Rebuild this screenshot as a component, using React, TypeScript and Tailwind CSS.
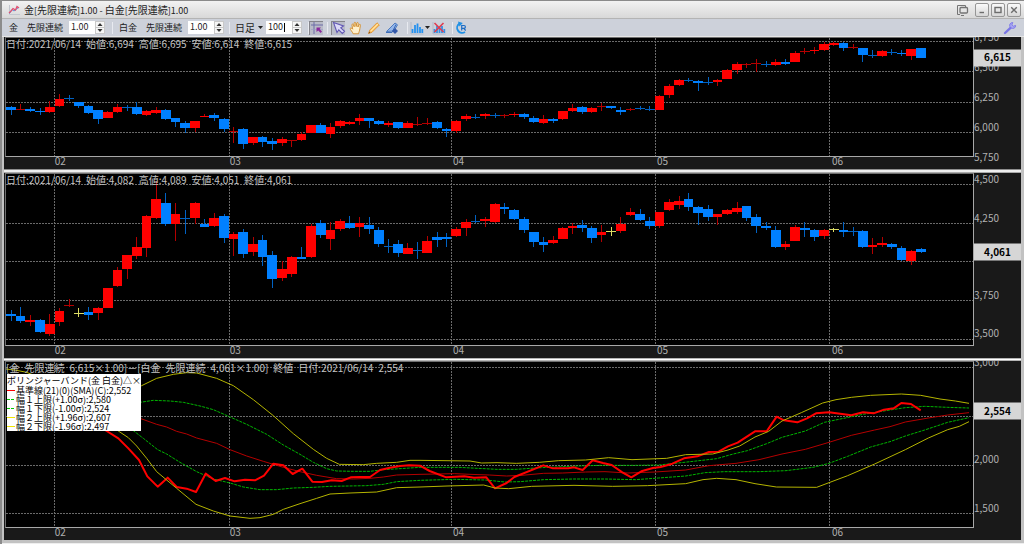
import React from "react";

type Kind = "R" | "B" | "Y";
type Candle = [Kind, number, number, number, number];
type Tick = { label: string; y: number };
type Curve = { color: string; width: number; dash?: string; points: string };

// Chart space uses three units per pixel.
const LEFT = 18;
const SPAN = 2901;
const STEP = 29.04;

const MONTHS = [
  { label: "02", x: 164 },
  { label: "03", x: 687 },
  { label: "04", x: 1355 },
  { label: "05", x: 1965 },
  { label: "06", x: 2488 },
];

// Each entry: kind, body top, body bottom, high, low.
const parse = (source: string): Candle[] =>
  source
    .trim()
    .split(/\s*,\s*/)
    .map((row) => {
      const [kind, ...n] = row.split(" ");
      return [kind as Kind, Number(n[0]), Number(n[1]), Number(n[2]), Number(n[3])];
    });

const GOLD = parse(`B 214 221 209 237,R 220 223 204 223,B 219 225 214 229,B 225 229 216 237,R 213 228 196 230,
R 188 211 173 214,B 186 189 177 196,B 199 211 197 217,B 209 231 207 234,B 222 248 222 263,R 229 246 225 246,
R 213 228 204 232,B 213 215 207 226,B 213 234 197 236,R 226 237 222 241,R 221 231 212 233,B 222 249 219 251,
B 247 258 247 272,B 262 275 255 291,R 255 277 255 288,R 239 243 235 243,B 238 246 232 256,B 249 280 245 287,
R 285 288 273 322,B 280 324 276 339,R 304 320 304 326,B 304 318 301 334,B 315 324 305 341,R 309 320 302 329,
R 312 315 312 332,R 294 312 287 314,R 267 291 267 291,B 267 291 262 291,R 272 293 262 306,R 255 270 253 275,
R 257 263 255 268,R 245 255 233 267,B 247 256 247 275,B 255 264 252 266,R 261 267 256 272,B 259 275 257 279,
R 261 275 256 276,R 264 267 244 270,R 261 263 246 266,B 259 275 256 280,B 279 284 277 302,R 255 284 252 292,
R 240 249 234 255,B 242 245 235 250,R 234 241 230 248,B 238 241 230 245,R 236 238 234 247,R 233 238 228 244,
B 235 244 231 249,B 247 258 240 261,R 249 262 238 264,B 250 254 245 260,R 226 249 224 253,R 216 226 204 228,
B 213 228 210 235,R 215 228 213 232,R 211 214 200 224,B 211 215 209 219,B 221 228 212 236,R 218 220 216 224,
B 215 218 211 222,B 218 220 209 225,R 181 221 178 223,R 150 178 145 187,R 132 148 130 150,B 131 134 126 138,
B 136 141 132 165,B 138 141 124 148,R 132 138 129 150,R 101 129 98 130,R 84 103 77 114,R 84 87 82 95,
R 81 84 68 107,B 84 87 74 94,R 77 88 68 90,B 77 84 70 88,R 51 77 46 79,R 44 47 37 54,R 42 46 33 54,
R 23 41 19 45,R 22 26 18 30,B 21 36 18 45,R 33 36 24 39,B 35 58 35 77,B 58 61 43 66,R 45 59 42 63,
B 47 50 38 57,B 51 55 43 59,R 40 59 39 72,B 37 65 37 65`);

const PLATINUM = parse(`B 433 437 421 454,B 438 454 411 459,R 450 455 435 467,B 450 487 447 490,R 461 491 432 497,
R 423 455 414 467,R 406 409 388 412,Y 429 431 414 440,B 426 434 411 449,R 414 430 412 449,R 355 413 355 414,
R 301 347 291 351,R 256 298 255 327,R 231 257 201 267,R 138 234 136 261,R 87 144 32 147,B 98 163 70 167,
R 133 163 99 213,B 145 148 120 192,R 100 144 96 162,B 161 171 146 171,R 143 168 128 170,B 138 203 133 218,
R 192 208 186 258,B 185 253 176 263,R 221 247 201 258,B 209 260 196 288,B 256 326 244 354,R 297 323 272 333,
R 262 312 259 320,B 262 266 232 267,R 167 261 163 264,B 160 194 150 204,R 181 208 157 239,R 153 178 148 184,
B 160 173 138 176,R 160 172 142 200,B 165 178 142 192,B 181 222 171 232,B 228 230 208 249,B 221 248 209 260,
R 233 251 218 251,B 239 242 215 267,R 213 248 197 249,B 201 210 185 230,B 202 208 190 232,R 177 197 170 201,
R 155 173 148 197,B 154 157 135 158,R 148 154 142 170,R 102 156 100 160,B 110 116 99 133,B 119 147 117 150,
B 147 180 142 188,B 185 217 185 230,B 216 225 201 246,R 211 220 197 223,R 174 206 172 208,R 169 174 159 192,
B 165 175 149 185,B 174 204 169 220,R 185 194 166 217,Y 183 185 171 197,R 161 182 140 190,R 127 135 113 138,
B 131 151 117 154,B 152 168 142 177,R 127 168 125 173,R 96 121 86 124,R 94 104 79 117,B 88 111 69 123,
B 112 128 107 164,B 117 142 106 154,R 133 142 131 164,R 120 131 117 136,R 115 125 97 131,B 107 144 107 153,
B 141 168 133 190,B 167 173 157 179,B 181 230 169 235,R 221 230 212 241,R 171 213 164 214,B 174 180 157 200,
B 181 201 177 213,R 181 198 178 208,Y 178 181 174 186,B 181 187 155 201,B 182 185 171 199,B 183 232 180 234,
R 226 232 204 251,R 219 224 201 232,B 223 231 220 238,B 233 269 229 273,R 242 272 240 284,B 237 246 234 250`);

const CURVES: Curve[] = [
  {
    color: "#00b400",
    width: 1,
    dash: "3 1",
    points:
      "300,170 420,142 460,136 510,138 550,142 600,153 640,164 686,184 740,208 800,238 850,270 900,298 940,322 980,341 1010,348 1060,349 1110,349 1150,344 1200,341 1260,337 1376,337 1433,340 1491,343 1549,343 1607,339 1664,336 1734,333 1803,331 1907,331 1976,330 2034,324 2080,319 2150,311 2196,298 2242,287 2300,266 2346,247 2416,228 2473,202 2531,190 2589,178 2670,165 2716,158 2774,154 2843,157 2907,159",
  },
  {
    color: "#00b400",
    width: 1,
    dash: "3 1",
    points:
      "370,205 400,227 430,250 473,284 500,297 540,322 590,350 640,372 690,384 730,396 780,404 830,404 880,399 940,397 990,394 1100,392 1150,388 1190,380 1260,376 1364,373 1456,375 1514,381 1560,380 1630,374 1722,372 1815,372 1907,374 1976,369 2057,363 2115,353 2173,350 2277,350 2358,347 2439,337 2487,325 2543,304 2612,276 2670,260 2716,243 2774,225 2843,202 2907,188",
  },
  {
    color: "#b40000",
    width: 1,
    points:
      "370,175 420,190 470,208 500,216 530,229 560,237 590,249 650,265 690,284 740,303 790,319 850,337 900,350 950,361 1010,371 1060,372 1110,370 1150,366 1190,360 1260,358 1364,356 1410,358 1468,360 1520,363 1566,361 1630,355 1688,354 1757,351 1815,350 1884,354 1965,351 2057,345 2127,332 2208,325 2277,314 2346,297 2416,283 2487,262 2554,241 2624,225 2670,215 2716,201 2785,189 2843,180 2907,173",
  },
  {
    color: "#ff0000",
    width: 2,
    points:
      "300,215 320,228 355,250 385,280 417,315 442,364 473,395 503,368 530,396 560,401 588,411 617,356 647,378 675,369 704,379 735,374 765,376 792,362 820,326 850,331 878,357 907,341 937,380 966,381 995,376 1025,378 1052,367 1080,366 1110,366 1140,345 1170,338 1200,333 1228,331 1260,332 1289,348 1339,367 1393,364 1422,368 1459,367 1485,400 1520,384 1543,366 1630,331 1659,340 1705,340 1722,337 1748,345 1778,316 1809,324 1835,330 1867,352 1894,367 1924,349 1959,339 1982,336 2017,326 2052,310 2092,304 2127,291 2156,290 2184,274 2213,263 2265,229 2300,229 2330,185 2352,196 2392,202 2421,190 2448,175 2487,172 2554,181 2589,172 2621,175 2652,164 2681,160 2704,144 2733,147 2762,166",
  },
  {
    color: "#b4b400",
    width: 1,
    points:
      "18,42 50,46 80,52 150,80 300,130 400,105 425,92 470,70 520,58 560,53 590,54 650,70 700,92 760,134 820,182 880,236 940,283 980,310 1018,328 1090,329 1130,325 1190,322 1230,316 1260,316 1410,318 1445,324 1491,323 1549,325 1618,322 1676,317 1757,315 1826,308 1896,314 2000,310 2057,299 2138,297 2184,285 2219,273 2265,246 2306,229 2346,198 2404,173 2468,144 2508,134 2554,127 2612,121 2704,117 2762,121 2820,132 2866,138 2907,145",
  },
  {
    color: "#b4b400",
    width: 1,
    points:
      "330,205 355,228 385,248 410,273 440,310 470,350 530,400 588,448 640,468 690,483 750,490 780,488 820,478 850,463 900,446 950,430 990,417 1050,414 1130,411 1190,398 1260,396 1341,393 1451,390 1485,399 1526,401 1595,394 1722,391 1838,394 1942,392 2057,386 2109,374 2150,370 2208,374 2265,386 2329,396 2450,397 2487,383 2543,362 2624,327 2716,284 2785,249 2843,224 2878,214 2907,200",
  },
];

const BODY = { R: "#ff0000", B: "#0080ff", Y: "#dcdc64" };
const WICK = { R: "#b40000", B: "#0062c4", Y: "#dcdc64" };

function Candles({ data }: { data: Candle[] }) {
  return (
    <g shapeRendering="crispEdges">
      {data.map(([kind, top, bottom, high, low], i) => {
        const x = 18.3 + STEP * i;
        const thin = bottom - top <= 3;
        return (
          <g key={i}>
            <rect x={x + 13.5} y={high} width={3} height={Math.max(low - high, 3)} fill={WICK[kind]} />
            <rect
              x={x}
              y={top}
              width={STEP}
              height={Math.max(bottom - top, 3)}
              fill={thin ? WICK[kind] : BODY[kind]}
            />
          </g>
        );
      })}
    </g>
  );
}

function Words({ words }: { words: string[] }) {
  return (
    <p className="pointer-events-none absolute top-0 left-0 flex gap-[5px] text-[10px] leading-3 whitespace-nowrap text-[#c4c4c4]">
      {words.map((w, i) => (
        <span key={i}>{w}</span>
      ))}
    </p>
  );
}

type PanelProps = {
  name: string;
  grow: string;
  top: number;
  height: number;
  grid: number[];
  ticks: Tick[];
  price: Tick;
  words: string[];
  drawing: React.ReactNode;
  children?: React.ReactNode;
};

function Panel({ name, grow, top, height, grid, ticks, price, words, drawing, children }: PanelProps) {
  const pct = (y: number) => `${((y - top) / height) * 100}%`;
  return (
    <section aria-label={name} className={`flex min-h-0 bg-[#191919] ${grow}`}>
      <div className="flex min-w-0 flex-1 flex-col">
        <div className="relative ml-px min-h-0 flex-1 border border-t-[#6e6e6e] border-r-[#a8a8a8] border-b-[#a8a8a8] border-l-[#6e6e6e] bg-black">
          <svg
            viewBox={`${LEFT} ${top} ${SPAN} ${height}`}
            preserveAspectRatio="none"
            className="absolute inset-0 h-full w-full"
            aria-hidden="true"
          >
            <g shapeRendering="crispEdges" stroke="#6a6a6a" strokeDasharray="2 1">
              {grid.map((y) => (
                <line key={y} x1={LEFT} x2={LEFT + SPAN} y1={y} y2={y} vectorEffect="non-scaling-stroke" />
              ))}
              {MONTHS.map((m) => (
                <line key={m.label} x1={m.x} x2={m.x} y1={top} y2={top + height} vectorEffect="non-scaling-stroke" />
              ))}
            </g>
            {drawing}
          </svg>
          <Words words={words} />
          {children}
        </div>
        <div className="relative h-3 shrink-0">
          {MONTHS.map((m) => (
            <span
              key={m.label}
              className="absolute top-0 text-[10px] leading-[7px] text-[#b0b0b0]"
              style={{ left: `${((m.x - 12) / SPAN) * 100}%` }}
            >
              {m.label}
            </span>
          ))}
        </div>
      </div>
      <div className="flex w-[47px] shrink-0 flex-col overflow-hidden">
        <div className="relative mt-px flex-1">
          {ticks.map((t) => (
            <span
              key={t.label}
              className="absolute left-0 -translate-y-full text-[10px] leading-[13px] text-[#b0b0b0]"
              style={{ top: pct(t.y) }}
            >
              {t.label}
            </span>
          ))}
          <strong
            className="absolute right-0 left-0 flex h-[17px] -translate-y-1/2 items-center justify-center bg-[#d6d6d6] pb-[2px] text-[10px] leading-none text-black"
            style={{ top: pct(price.y) }}
          >
            {price.label}
          </strong>
        </div>
        <div className="h-[13px] shrink-0" />
      </div>
    </section>
  );
}

const LEGEND = [
  { color: "#ff0000", dash: undefined, text: "基準線(21)(0)(SMA)(C):2,552" },
  { color: "#00c800", dash: "3 1", text: "幅１上限(+1.00σ):2,580" },
  { color: "#00c800", dash: "3 1", text: "幅１下限(-1.00σ):2,524" },
  { color: "#f0e600", dash: undefined, text: "幅２上限(+1.96σ):2,607" },
  { color: "#f0e600", dash: undefined, text: "幅２下限(-1.96σ):2,497" },
];

function Legend() {
  return (
    <div className="absolute top-3 left-px flex h-[57px] w-[134px] flex-col bg-white text-[9px] leading-[9px] whitespace-nowrap text-black">
      <div className="flex h-3 items-center">
        <span>ボリンジャーバンド(金 白金)</span>
        <button type="button" aria-label="折りたたむ">△</button>
        <button type="button" aria-label="閉じる">×</button>
      </div>
      {LEGEND.map((l) => (
        <div key={l.text} className="flex h-[9px] items-center gap-px">
          <svg viewBox="0 0 8 1" className="h-px w-2 shrink-0" shapeRendering="crispEdges" aria-hidden="true">
            <path d="M0 .5H8" stroke={l.color} strokeWidth="1" strokeDasharray={l.dash} />
          </svg>
          <span>{l.text}</span>
        </div>
      ))}
    </div>
  );
}

function Separator() {
  return <span aria-hidden="true" className="h-3 w-px shrink-0 bg-[#e8eaf0]" />;
}

function Stepper({ id, label, value, caret }: { id: string; label: string; value: string; caret?: boolean }) {
  return (
    <div className="relative flex h-[13px] w-9 shrink-0">
      <input
        id={id}
        aria-label={label}
        defaultValue={value}
        className="h-full w-[26px] min-w-0 bg-white pb-[2px] pl-[2px] text-[9px] leading-none text-[#222] outline-none"
      />
      {caret && <span aria-hidden="true" className="absolute top-[2px] left-[18px] h-[9px] w-px bg-black" />}
      <div className="flex w-[10px] flex-col border border-[#c8c8c8] bg-[#f6f6f6]">
        <button type="button" aria-label={`${label} 増`} className="flex flex-1 items-center justify-center">
          <svg viewBox="0 0 6 3" className="h-[3px] w-[6px]"><path d="M3 0 5.5 3H.5z" fill="#333" /></svg>
        </button>
        <button type="button" aria-label={`${label} 減`} className="flex flex-1 items-center justify-center border-t border-[#c8c8c8]">
          <svg viewBox="0 0 6 3" className="h-[3px] w-[6px]"><path d="M3 3 5.5 0H.5z" fill="#333" /></svg>
        </button>
      </div>
    </div>
  );
}

function Tool({ label, active, children }: { label: string; active?: boolean; children: React.ReactNode }) {
  return (
    <button
      type="button"
      aria-label={label}
      className={`flex h-[14px] w-[14px] shrink-0 items-center justify-center ${
        active ? "border-t border-l border-[#85858c] bg-[#b9bcc8]" : ""
      }`}
    >
      <svg viewBox="0 0 14 14" className="h-[14px] w-[14px] shrink-0" fill="none" aria-hidden="true">
        {children}
      </svg>
    </button>
  );
}

function Triangle() {
  return (
    <svg viewBox="0 0 5 3" className="h-[3px] w-[5px] shrink-0" aria-hidden="true">
      <path d="M0 0H5L2.5 3z" fill="#222" />
    </svg>
  );
}

function WindowButton({ label, children }: { label: string; children: React.ReactNode }) {
  return (
    <button
      type="button"
      aria-label={label}
      className="flex h-[14px] w-[14px] items-center justify-center rounded-[2px] border border-[#969696] bg-linear-to-b from-[#fafafa] to-[#d6d6d6]"
    >
      <svg viewBox="0 0 12 12" className="h-3 w-3 shrink-0" fill="none" stroke="#6c6c6c" strokeWidth="1.4" aria-hidden="true">
        {children}
      </svg>
    </button>
  );
}

function TitleBar() {
  return (
    <header className="flex h-[19px] shrink-0 items-center border-t border-b border-t-[#8a8a8a] border-b-[#b4b4b4] bg-linear-to-b from-[#f2f2f2] to-[#d8d8d8] pr-[3px] pl-[6px]">
      <svg viewBox="0 0 12 12" className="h-3 w-3" fill="none" aria-hidden="true">
        <path d="M1.5 1V10.5H12" stroke="#c2c6ce" />
        <path d="M1.5 9.5 4 5.5 6 7 10.5 3.5" stroke="#5a8fd8" />
        <path d="M1 9 3.5 6.5 5 4.5 7.5 6 9 2.5 11 4" stroke="#e05070" strokeWidth="1.3" />
      </svg>
      <h1 className="ml-[4px] text-[9px] leading-none whitespace-nowrap text-[#222]">
        <span className="text-[10px]">金</span>[<span className="text-[10px]">先限連続</span>]1.00 -{" "}
        <span className="text-[10px]">白金</span>[<span className="text-[10px]">先限連続</span>]1.00
      </h1>
      <div className="ml-auto flex items-center gap-[2px]">
        <button type="button" aria-label="ポップアウト" className="mr-[4px]">
          <svg viewBox="0 0 13 12" className="h-3 w-[13px]" fill="none" stroke="#747474" aria-hidden="true">
            <path d="M4 10.5H1.5V1.5H9.5V3" />
            <rect x="4" y="3.5" width="7.5" height="5.5" rx="1" fill="#e4e4e4" strokeWidth="1.3" />
            <path d="M5 11.5H8" />
          </svg>
        </button>
        <WindowButton label="最小化"><path d="M3.5 8.5H8" /></WindowButton>
        <WindowButton label="最大化"><rect x="3" y="3.5" width="6" height="5" /></WindowButton>
        <WindowButton label="閉じる"><path d="m3.2 3.2 5.6 5.6m0-5.6-5.6 5.6" /></WindowButton>
      </div>
    </header>
  );
}

function Toolbar() {
  return (
    <div role="toolbar" aria-label="チャート操作" className="flex h-[17px] shrink-0 items-center bg-[#cdd1da] pr-[7px] pl-[7px] text-[9px] leading-none whitespace-nowrap text-[#222]">
      <label htmlFor="gold" className="flex w-[60px] shrink-0 gap-[9px]"><span>金</span><span>先限連続</span></label>
      <Stepper id="gold" label="金 倍率" value="1.00" />
      <div className="flex w-[14px] shrink-0 justify-center"><Separator /></div>
      <label htmlFor="platinum" className="flex w-[69px] shrink-0 gap-[9px]"><span>白金</span><span>先限連続</span></label>
      <Stepper id="platinum" label="白金 倍率" value="1.00" />
      <div className="flex w-[11px] shrink-0 justify-center"><Separator /></div>
      <div className="flex w-[31px] shrink-0 items-center gap-[3px]">
        <select aria-label="足種" defaultValue="日足" className="w-5 appearance-none bg-transparent text-[10px] leading-none">
          <option>日足</option>
        </select>
        <Triangle />
      </div>
      <Stepper id="bars" label="本数" value="100" caret />
      <div className="flex w-[7px] shrink-0 justify-end"><Separator /></div>
      <Tool label="十字カーソル" active>
        <path d="M1 4H13M4 1V13" stroke="#6c6ca8" />
        <path d="M1 8.5H13" stroke="#9a9ac4" strokeWidth=".6" />
        <path d="M6.5 6.5H11L9.6 8 12 10.6 10.7 12 8.2 9.4 6.5 11z" fill="#8a2a9c" />
      </Tool>
      <div className="flex w-2 shrink-0 justify-center"><Separator /></div>
      <Tool label="選択" active>
        <path d="M1.5 1.5 11.5 5 8.8 6.8 12.5 10.3 10.3 12.5 6.8 8.8 5 11.5z" fill="#dcdaf8" stroke="#6258b4" strokeWidth="1.1" />
      </Tool>
      <div className="ml-[4px] flex shrink-0 gap-[4px]">
        <Tool label="移動">
          <path
            d="M4.2 12.8C3.5 10.8 1 8.6 1.2 7.4 1.6 6.6 2.8 7 3.7 8.2L2.9 3.8C3 2.8 4.1 2.8 4.4 3.8L5.2 5.8 5.1 2.1C5.3 1 6.5 1 6.7 2.1L7.1 5.5 7.8 2C8.2 1.1 9.3 1.4 9.2 2.4L8.9 6 10.2 3.6C10.8 3 11.7 3.4 11.4 4.3L10.9 7.5C10.7 10 9.8 11 9.6 12.8z"
            fill="#fff0cc"
            stroke="#d08a28"
            strokeWidth=".9"
          />
        </Tool>
        <Tool label="鉛筆">
          <path d="M1.5 12.5 2.8 9 10 1.8 12.3 4 5 11.3z" fill="#ffc668" stroke="#dc8c28" strokeWidth=".8" />
          <path d="M3.8 10 11 2.8" stroke="#fff0c0" strokeWidth=".9" />
          <path d="M1.5 12.5 2.2 10.6 3.4 11.8z" fill="#805020" />
        </Tool>
        <Tool label="図形削除">
          <path d="M1.5 10.5 10 2 12.5 3.8 9 10z" fill="#94b6ea" stroke="#4474bc" strokeWidth=".9" />
          <path d="M1 11.5H7L11 3.5" stroke="#3c6cb8" />
          <path d="m7 10 3-3 3 3-3 3z" fill="#3458a8" />
        </Tool>
      </div>
      <div className="flex w-[9px] shrink-0 justify-end"><Separator /></div>
      <div className="ml-[2px] flex shrink-0 items-center gap-px">
        <Tool label="指標">
          <path d="M1 1V13H13.5" stroke="#aab4c4" strokeWidth=".8" />
          <path d="M2.5 12V8M5 12V4M7.5 12V2.5M10 12V6M12.3 12V8" stroke="#2490ee" strokeWidth="1.8" />
        </Tool>
        <Triangle />
      </div>
      <div className="ml-[2px] flex shrink-0">
        <Tool label="指標削除">
          <path d="M1 1V13H13.5" stroke="#aab4c4" strokeWidth=".8" />
          <path d="M2.5 12V8M5 12V5M7.5 12V6M10 12V5M12.3 12V8" stroke="#3490e4" strokeWidth="1.8" />
          <path d="m2.5 2 9 9m0-9-9 9" stroke="#e03c50" strokeWidth="1.6" />
        </Tool>
      </div>
      <div className="flex w-[7px] shrink-0 justify-end"><Separator /></div>
      <div className="ml-px flex shrink-0">
        <Tool label="更新">
          <path d="M5.4 2.6A5 5 0 1 0 11 11" stroke="#2090e4" strokeWidth="1.9" />
          <path d="M4 .4 8.8 2 5.4 5.4z" fill="#2090e4" />
          <path d="M7.7 9.5V4.5H10A1.4 1.4 0 0 1 10 7.3H8M9.7 7.3 11.7 9.5" stroke="#1c6cc4" strokeWidth="1.2" />
        </Tool>
      </div>
      <div className="ml-auto flex">
        <Tool label="設定">
          <path d="M2 12 7.5 6.8" stroke="#7a76e6" strokeWidth="2.4" strokeLinecap="round" />
          <path d="M9.8 1.5C7.4 1.5 6 3.6 6.9 5.6 7.8 7.8 10.8 8 12.3 6.2L12.6 4.4 10.4 5.2 8.9 3.8z" fill="#a8a6f2" stroke="#7a76e6" strokeWidth=".9" />
        </Tool>
      </div>
    </div>
  );
}

export default function App() {
  return (
    <div className="flex h-screen min-h-[400px] flex-col border-l-2 border-[#8c8c8c] bg-[#c2c2c2] font-['Noto_Sans_CJK_JP',sans-serif]">
      <TitleBar />
      <Toolbar />
      <main className="flex min-h-0 flex-1 flex-col border-t border-b border-t-[#e6e6e6] border-b-[#eeeeee] pr-[3px] pb-[3px] pl-[2px]">
        <Panel
          name="金 先限連続"
          grow="flex-[132]"
          top={6}
          height={354}
          grid={[17, 107, 199, 289]}
          ticks={[
            { label: "6,750", y: 20 },
            { label: "6,500", y: 110 },
            { label: "6,250", y: 200 },
            { label: "6,000", y: 290 },
            { label: "5,750", y: 380 },
          ]}
          price={{ label: "6,615", y: 66 }}
          words={["日付:2021/06/14", "始値:6,694", "高値:6,695", "安値:6,614", "終値:6,615"]}
          drawing={<Candles data={GOLD} />}
        />
        <div aria-hidden="true" className="h-1 shrink-0 border-t border-b border-t-[#8e8e8e] border-b-[#aaaaaa] bg-[#eeeeee]" />
        <Panel
          name="白金 先限連続"
          grow="flex-[185]"
          top={12}
          height={513}
          grid={[44, 160, 275, 391, 507]}
          ticks={[
            { label: "4,500", y: 45 },
            { label: "4,250", y: 161 },
            { label: "3,750", y: 392 },
            { label: "3,500", y: 508 },
          ]}
          price={{ label: "4,061", y: 247 }}
          words={["日付:2021/06/14", "始値:4,082", "高値:4,089", "安値:4,051", "終値:4,061"]}
          drawing={<Candles data={PLATINUM} />}
        />
        <div aria-hidden="true" className="h-[3px] shrink-0 border-t border-b border-[#b4b4b4] bg-white" />
        <Panel
          name="価格差 ボリンジャーバンド"
          grow="flex-[179]"
          top={21}
          height={495}
          grid={[38, 184, 330, 476]}
          ticks={[
            { label: "3,000", y: 39 },
            { label: "2,000", y: 331 },
            { label: "1,500", y: 477 },
          ]}
          price={{ label: "2,554", y: 169 }}
          words={["[金", "先限連続", "6,615×1.00]－[白金", "先限連続", "4,061×1.00]", "終値", "日付:2021/06/14", "2,554"]}
          drawing={
            <g fill="none" strokeLinejoin="round">
              {CURVES.map((c, i) => (
                <polyline
                  key={i}
                  points={c.points}
                  stroke={c.color}
                  strokeWidth={c.width}
                  strokeDasharray={c.dash}
                  vectorEffect="non-scaling-stroke"
                />
              ))}
            </g>
          }
        >
          <Legend />
        </Panel>
      </main>
    </div>
  );
}
